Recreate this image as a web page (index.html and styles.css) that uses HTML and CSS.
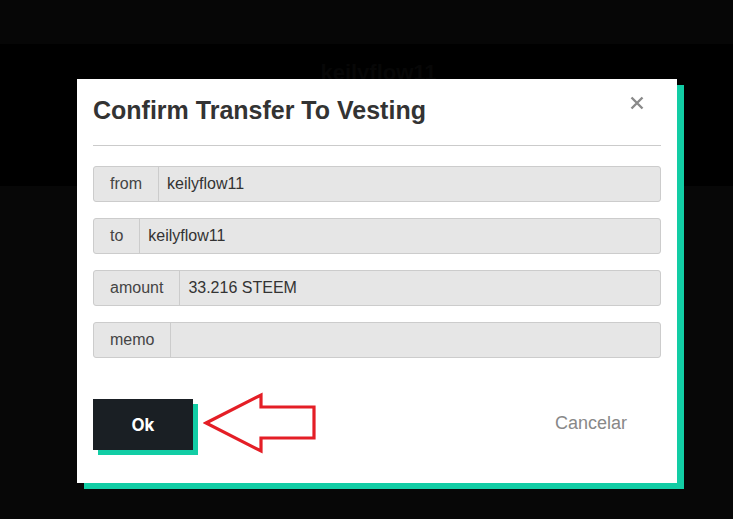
FILE: index.html
```html
<!DOCTYPE html>
<html lang="en">
<head>
<meta charset="utf-8">
<title>Confirm Transfer To Vesting</title>
<link rel="stylesheet" href="styles.css">
</head>
<body>
<div class="page">
  <div class="topbar"></div>
  <div class="hero"><h2 class="hero-name">keilyflow11</h2></div>
  <div class="content"></div>
</div>

<div class="modal">
  <div class="modal-head">
    <h3 class="modal-title">Confirm Transfer To Vesting</h3>
    <button class="close" aria-label="Close">
      <svg width="14" height="14" viewBox="0 0 14 14"><path d="M1.5 1.5 L12.5 12.5 M12.5 1.5 L1.5 12.5" stroke="#8a8a8a" stroke-width="2.4" stroke-linecap="butt" fill="none"/></svg>
    </button>
  </div>
  <hr class="rule">
  <div class="fields">
    <div class="group"><span class="addon">from</span><span class="value">keilyflow11</span></div>
    <div class="group"><span class="addon">to</span><span class="value">keilyflow11</span></div>
    <div class="group"><span class="addon">amount</span><span class="value">33.216 STEEM</span></div>
    <div class="group"><span class="addon">memo</span><span class="value"></span></div>
  </div>
  <div class="footer">
    <button class="ok">Ok</button>
    <button class="cancel">Cancelar</button>
  </div>
  <svg class="arrow" width="116" height="62" viewBox="0 0 116 62">
    <path d="M3 31 L58 3 L58 15 L111 15 L111 46 L58 46 L58 59 Z" fill="none" stroke="#e41e26" stroke-width="3.2" stroke-linejoin="miter"/>
  </svg>
</div>
</body>
</html>
```
FILE: styles.css
```css
html, body {
  margin: 0;
  padding: 0;
  background: #000;
}
body {
  width: 733px;
  height: 519px;
  overflow: hidden;
  position: relative;
  font-family: "Liberation Sans", Arial, sans-serif;
}
.page {
  display: flex;
  flex-direction: column;
  height: 519px;
}
.topbar {
  height: 44px;
  background: #060606;
}
.hero {
  height: 142px;
  background: #000;
  display: flex;
  justify-content: center;
}
.hero-name {
  margin: 16px 0 0 24px;
  font-size: 22px;
  font-weight: bold;
  color: #070707;
}
.content {
  flex: 1;
  background: #070707;
}
.modal {
  position: absolute;
  left: 77px;
  top: 79px;
  width: 600px;
  height: 404px;
  box-sizing: border-box;
  background: #fff;
  box-shadow: 7px 6px 0 #12cda5;
  padding: 18px 16px 0 16px;
}
.modal-head {
  display: flex;
  justify-content: space-between;
  align-items: flex-start;
}
.modal-title {
  margin: 0;
  font-size: 25px;
  line-height: 26px;
  font-weight: bold;
  color: #333;
}
.close {
  background: none;
  border: 0;
  padding: 0;
  margin: -1px 17px 0 0;
  width: 14px;
  height: 14px;
  display: block;
}
.close svg { display: block; }
.rule {
  border: 0;
  border-top: 1px solid #cbcbcb;
  margin: 22px 0 0 0;
}
.fields {
  margin-top: 20px;
  display: flex;
  flex-direction: column;
  gap: 16px;
}
.group {
  display: flex;
  height: 36px;
  box-sizing: border-box;
  border: 1px solid #cccccc;
  border-radius: 3px;
  background: #e6e6e6;
  font-size: 16px;
  color: #333;
}
.addon {
  display: flex;
  align-items: center;
  padding: 0 16px;
  border-right: 1px solid #cccccc;
  color: #444;
}
.value {
  display: flex;
  align-items: center;
  padding: 0 8px;
  flex: 1;
  color: #333;
}
.footer {
  margin-top: 41px;
  display: flex;
  justify-content: space-between;
  align-items: center;
}
.ok {
  width: 100px;
  height: 51px;
  border: 0;
  background: #1a1f24;
  color: #fff;
  font-family: "Inter", "Liberation Sans", sans-serif;
  font-weight: 700;
  font-size: 17px;
  box-shadow: 5px 5px 0 #12cda5;
  padding: 0;
}
.cancel {
  background: none;
  border: 0;
  padding: 0;
  margin: 0 34px 3px 0;
  font-family: "Liberation Sans", Arial, sans-serif;
  font-size: 18px;
  color: #888;
}
.arrow {
  position: absolute;
  left: 126px;
  top: 313px;
}
```
